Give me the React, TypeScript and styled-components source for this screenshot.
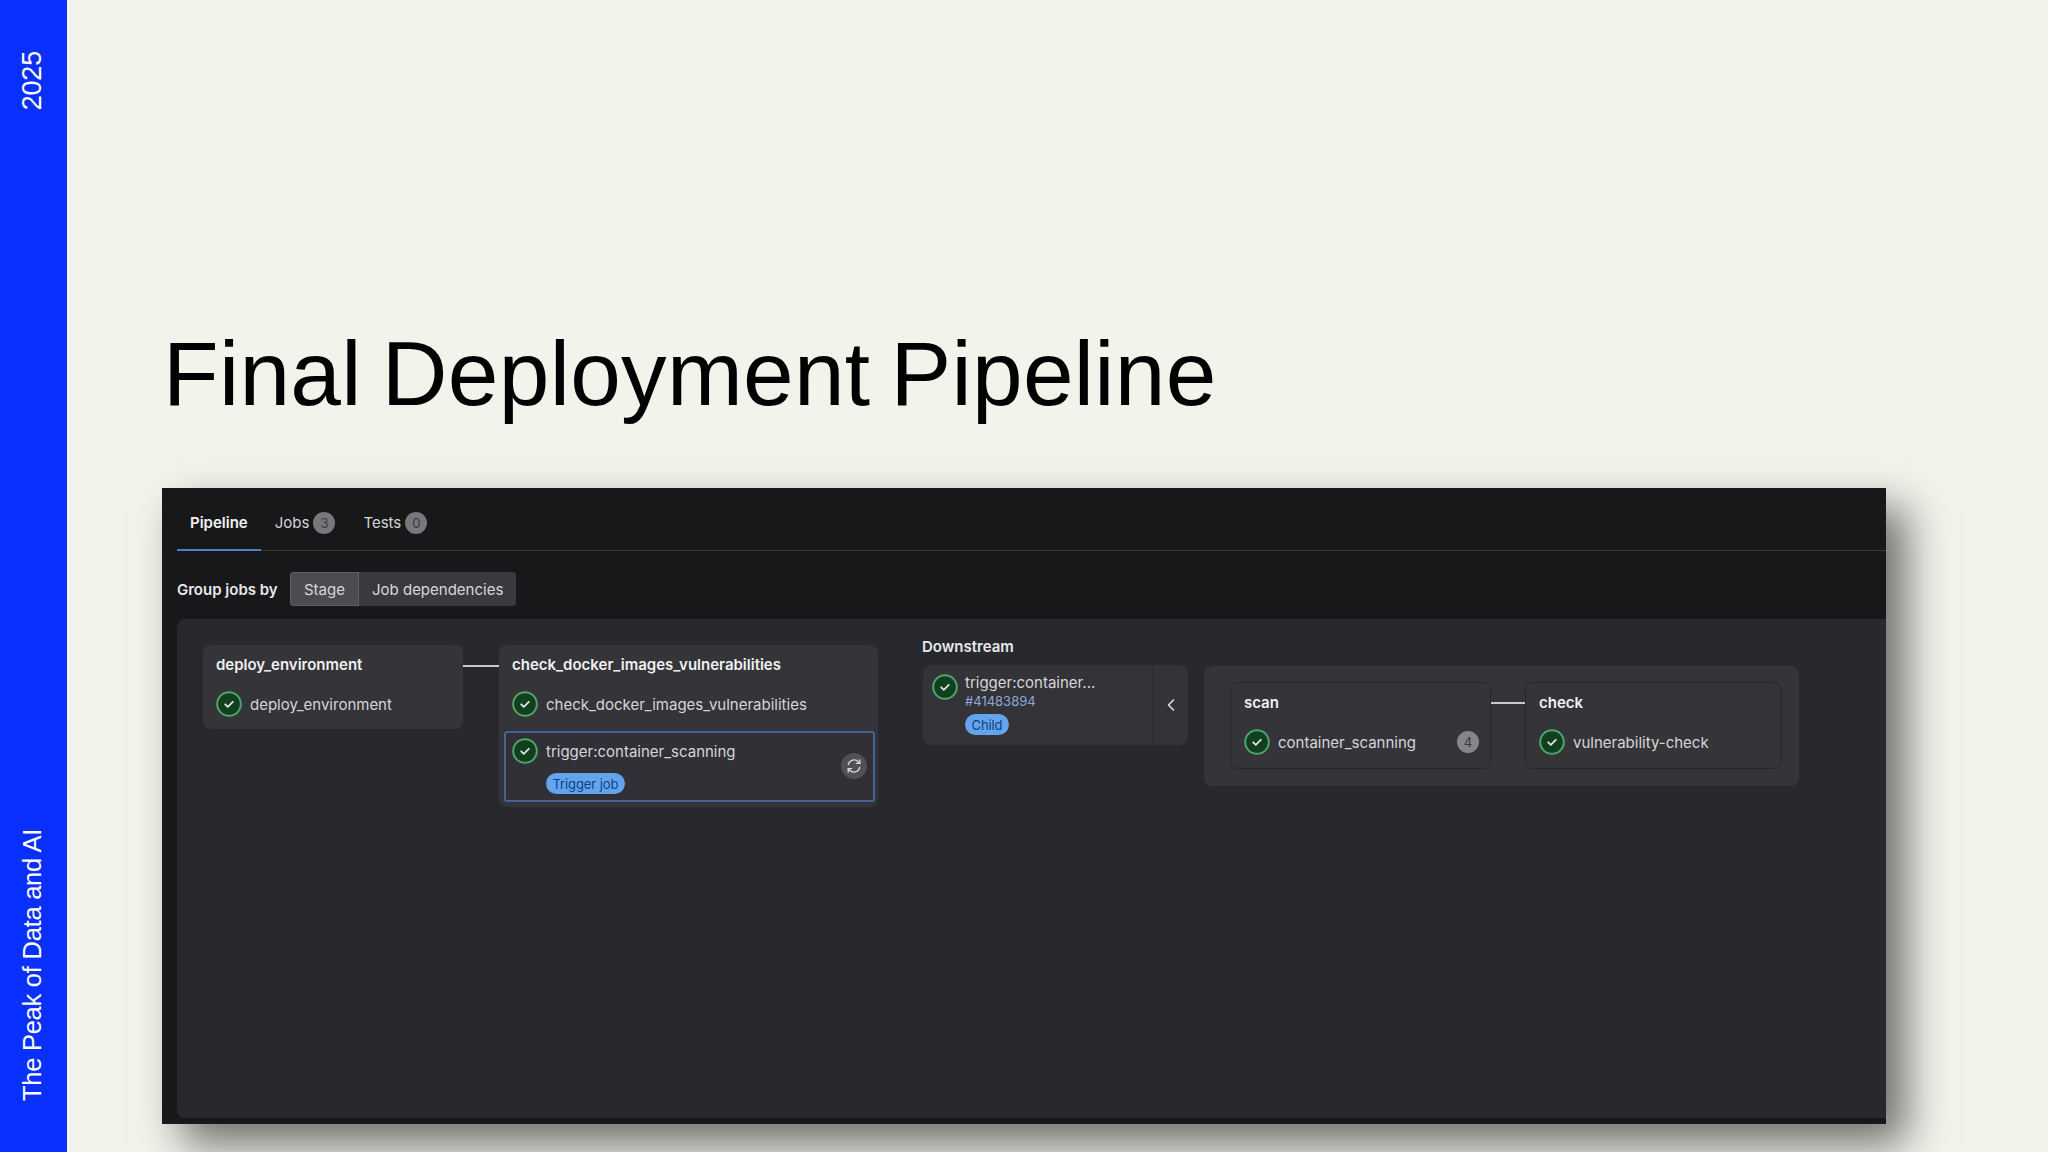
import React from "react";
import styled, { createGlobalStyle } from "styled-components";

const Global = createGlobalStyle`
  html, body { margin: 0; padding: 0; background: #f3f2eb; }
  * { box-sizing: border-box; }
`;

const Page = styled.div`
  width: 2048px;
  height: 1152px;
  display: flex;
  overflow: hidden;
  background: #f3f2eb;
  font-family: "Liberation Sans", Arial, sans-serif;
`;

const Rail = styled.aside`
  width: 67px;
  flex: none;
  background: #0a30ff;
  color: #fff;
  display: flex;
  flex-direction: column;
  justify-content: space-between;
  align-items: center;
  padding: 51px 4px 51px 0;
`;

const RailText = styled.span<{ $size: number; $spacing: number }>`
  writing-mode: vertical-rl;
  transform: rotate(180deg);
  font-size: ${(p) => p.$size}px;
  line-height: 30px;
  letter-spacing: ${(p) => p.$spacing}px;
  white-space: nowrap;
`;

const Main = styled.main`
  flex: 1;
  min-width: 0;
  padding: 319px 0 0 95px;
  display: flex;
  flex-direction: column;
`;

const Title = styled.h1`
  margin: 0 0 60px 1px;
  height: 109px;
  font-size: 91px;
  line-height: 109px;
  font-weight: 400;
  letter-spacing: 0.3px;
  word-spacing: -5.5px;
  color: #000;
  white-space: nowrap;
`;

const Shot = styled.section`
  width: 1724px;
  height: 636px;
  background: #18181b;
  box-shadow: 20px 20px 40px rgba(0, 0, 0, 0.55);
  padding: 0 0 6px 15px;
  display: flex;
  flex-direction: column;
  font-family: Inter, "Liberation Sans", sans-serif;
  font-size: 15px;
  color: #dcdcde;
`;

const Tabs = styled.nav`
  height: 63px;
  flex: none;
  display: flex;
  align-items: stretch;
  border-bottom: 1px solid #3a3a3e;
`;

const Tab = styled.div<{ $active?: boolean }>`
  display: flex;
  align-items: center;
  gap: 4px;
  padding: 8px ${(p) => (p.$active ? "13px" : "14px")} 0;
  margin-bottom: -1px;
  font-weight: ${(p) => (p.$active ? 600 : 400)};
  color: ${(p) => (p.$active ? "#f2f2f3" : "#d4d4d7")};
  border-bottom: 2px solid ${(p) => (p.$active ? "#4f7fc4" : "transparent")};
`;

const Count = styled.span`
  width: 22px;
  height: 22px;
  border-radius: 50%;
  background: #77777c;
  color: #3a3a3e;
  font-size: 13px;
  display: flex;
  align-items: center;
  justify-content: center;
  flex: none;
`;

const GroupRow = styled.div`
  height: 34px;
  margin-top: 21px;
  flex: none;
  display: flex;
  align-items: center;
`;

const GroupLabel = styled.span`
  font-weight: 600;
  color: #e8e8ea;
  width: 113px;
`;

const Segment = styled.div<{ $active?: boolean }>`
  height: 34px;
  padding: 0 ${(p) => (p.$active ? "14px" : "13px")};
  display: flex;
  align-items: center;
  color: #d8d8da;
  background: ${(p) => (p.$active ? "#4b4b50" : "#3a3a3e")};
  border-radius: ${(p) => (p.$active ? "4px 0 0 4px" : "0 4px 4px 0")};
  box-shadow: ${(p) => (p.$active ? "inset 0 0 0 1px #5f5f64" : "none")};
`;

const Canvas = styled.div`
  flex: 1;
  margin-top: 13px;
  background: #28282f;
  border-radius: 8px 0 0 8px;
  padding: 26px 0 0 26px;
  display: flex;
  align-items: flex-start;
`;

const Stage = styled.div<{ $width: number; $outlined?: boolean }>`
  width: ${(p) => p.$width}px;
  flex: none;
  background: #343439;
  border-radius: 8px;
  padding-bottom: ${(p) => (p.$outlined ? "6px" : "5px")};
  border: ${(p) => (p.$outlined ? "1px solid #27272c" : "none")};
`;

const StageTitle = styled.div`
  height: 39px;
  padding: 0 13px;
  display: flex;
  align-items: center;
  font-weight: 600;
  color: #f0f0f1;
  white-space: nowrap;
`;

const Connector = styled.div<{ $width: number }>`
  width: ${(p) => p.$width}px;
  height: 2px;
  flex: none;
  margin-top: 20px;
  background: #c9c9cc;
`;

const Job = styled.div`
  height: 40px;
  padding: 0 13px;
  display: flex;
  align-items: center;
  gap: 8px;
  white-space: nowrap;
  color: #d6d6d9;
`;

const JobName = styled.span`
  flex: 1;
`;

const TriggerJob = styled.div`
  position: relative;
  margin: 7px 3px 0 5px;
  height: 71px;
  border: 2px solid #46648f;
  border-radius: 3px;
  background: #303036;
  padding: 4px 6px 0 6px;
  display: flex;
  flex-direction: column;
  box-shadow: 0 0 0 1px #2a3344;
`;

const TriggerHead = styled.div`
  display: flex;
  align-items: center;
  gap: 8px;
  height: 28px;
  color: #d6d6d9;
  white-space: nowrap;
`;

const Badge = styled.span<{ $left?: number; $top?: number }>`
  align-self: flex-start;
  height: 21px;
  padding: 0 6.5px;
  border-radius: 11px;
  background: #63a5ec;
  color: #0f3f86;
  font-size: 13px;
  letter-spacing: -0.1px;
  display: inline-flex;
  align-items: center;
  margin-left: ${(p) => p.$left ?? 0}px;
  margin-top: ${(p) => p.$top ?? 0}px;
`;

const Retry = styled.div`
  position: absolute;
  right: 6px;
  top: 20px;
  width: 26px;
  height: 26px;
  border-radius: 50%;
  background: #505055;
  color: #d6d6d9;
  display: flex;
  align-items: center;
  justify-content: center;
`;

const Downstream = styled.div`
  flex: none;
  margin-left: 45px;
  margin-top: -8px;
`;

const DownstreamLabel = styled.div`
  font-weight: 600;
  color: #e8e8ea;
  height: 19px;
  line-height: 19px;
  margin-bottom: 9px;
  margin-left: -1px;
`;

const Bridge = styled.div`
  width: 265px;
  height: 80px;
  background: #333338;
  border-radius: 8px;
  display: flex;
`;

const BridgeBody = styled.div`
  flex: 1;
  padding: 9px 0 0 9px;
  display: flex;
  gap: 7px;
`;

const BridgeText = styled.div`
  display: flex;
  flex-direction: column;
  white-space: nowrap;
`;

const BridgeName = styled.span`
  height: 18px;
  line-height: 18px;
  color: #d6d6d9;
`;

const BridgeId = styled.span`
  height: 18px;
  line-height: 18px;
  font-size: 13px;
  color: #8ea9d6;
  margin-bottom: 4px;
`;

const Toggle = styled.div`
  width: 36px;
  border-left: 1px solid #2c2c31;
  color: #e0e0e2;
  display: flex;
  align-items: center;
  justify-content: center;
`;

const ChildPanel = styled.div`
  flex: none;
  width: 595px;
  height: 120px;
  margin: 21px 0 0 16px;
  padding: 16px 0 0 26px;
  border-radius: 8px;
  background: #343439;
  display: flex;
  align-items: flex-start;
`;

const Pill = styled.span`
  width: 22px;
  height: 22px;
  border-radius: 50%;
  background: #85858a;
  color: #37373b;
  font-size: 13px;
  display: flex;
  align-items: center;
  justify-content: center;
  flex: none;
  margin-right: -2px;
`;

const StatusIcon = () => (
  <svg width="26" height="26" viewBox="0 0 26 26" style={{ flex: "none" }}>
    <circle cx="13" cy="13" r="11.8" fill="#123f1f" stroke="#4fa56a" strokeWidth="2" />
    <path d="M9.2 13.3l2.6 2.5 5-5" fill="none" stroke="#d7e9db" strokeWidth="1.8" strokeLinecap="round" strokeLinejoin="round" />
  </svg>
);

const RetryIcon = () => (
  <svg width="16" height="16" viewBox="0 0 16 16" fill="none" stroke="currentColor" strokeWidth="1.4" strokeLinecap="round" strokeLinejoin="round">
    <path d="M2.3 6.6A5.9 5.9 0 0 1 12.6 4l1 1.2" />
    <path d="M13.8 1.9v3.5h-3.4" />
    <path d="M13.7 9.4A5.9 5.9 0 0 1 3.4 12l-1-1.2" />
    <path d="M2.2 14.1v-3.5h3.4" />
  </svg>
);

const ChevronIcon = () => (
  <svg width="16" height="16" viewBox="0 0 16 16" fill="none" stroke="currentColor" strokeWidth="1.6" strokeLinecap="round" strokeLinejoin="round">
    <path d="M10.5 3L5.5 8l5 5" />
  </svg>
);

export default function App() {
  return (
    <Page>
      <Global />
      <Rail>
        <RailText $size={27} $spacing={-0.2}>2025</RailText>
        <RailText $size={25.5} $spacing={-0.25}>The Peak of Data and AI</RailText>
      </Rail>
      <Main>
        <Title>Final Deployment Pipeline</Title>
        <Shot>
          <Tabs>
            <Tab $active>Pipeline</Tab>
            <Tab>
              Jobs<Count>3</Count>
            </Tab>
            <Tab>
              Tests<Count>0</Count>
            </Tab>
          </Tabs>
          <GroupRow>
            <GroupLabel>Group jobs by</GroupLabel>
            <Segment $active>Stage</Segment>
            <Segment>Job dependencies</Segment>
          </GroupRow>
          <Canvas>
            <Stage $width={260}>
              <StageTitle>deploy_environment</StageTitle>
              <Job>
                <StatusIcon />
                <JobName>deploy_environment</JobName>
              </Job>
            </Stage>
            <Connector $width={36} />
            <Stage $width={379}>
              <StageTitle>check_docker_images_vulnerabilities</StageTitle>
              <Job>
                <StatusIcon />
                <JobName>check_docker_images_vulnerabilities</JobName>
              </Job>
              <TriggerJob>
                <TriggerHead>
                  <StatusIcon />
                  trigger:container_scanning
                </TriggerHead>
                <Badge $left={34} $top={8}>Trigger job</Badge>
                <Retry>
                  <RetryIcon />
                </Retry>
              </TriggerJob>
            </Stage>
            <Downstream>
              <DownstreamLabel>Downstream</DownstreamLabel>
              <Bridge>
                <BridgeBody>
                  <StatusIcon />
                  <BridgeText>
                    <BridgeName>trigger:container...</BridgeName>
                    <BridgeId>#41483894</BridgeId>
                    <Badge>Child</Badge>
                  </BridgeText>
                </BridgeBody>
                <Toggle>
                  <ChevronIcon />
                </Toggle>
              </Bridge>
            </Downstream>
            <ChildPanel>
              <Stage $width={261} $outlined>
                <StageTitle>scan</StageTitle>
                <Job>
                  <StatusIcon />
                  <JobName>container_scanning</JobName>
                  <Pill>4</Pill>
                </Job>
              </Stage>
              <Connector $width={34} />
              <Stage $width={257} $outlined>
                <StageTitle>check</StageTitle>
                <Job>
                  <StatusIcon />
                  <JobName>vulnerability-check</JobName>
                </Job>
              </Stage>
            </ChildPanel>
          </Canvas>
        </Shot>
      </Main>
    </Page>
  );
}
